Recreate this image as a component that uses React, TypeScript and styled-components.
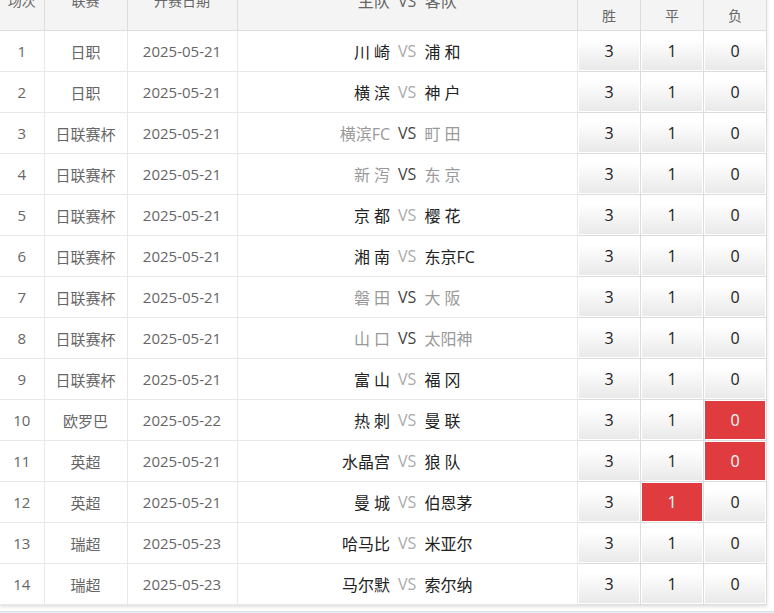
import React from "react";
import styled, { createGlobalStyle } from "styled-components";

const Global = createGlobalStyle`
  html, body { margin: 0; padding: 0; background: #fff; }
  body { font-family: "Open Sans", "Noto Sans CJK SC", sans-serif; overflow: hidden; }
`;

type Match = {
  no: number;
  league: string;
  date: string;
  home: string;
  away: string;
  muted?: boolean;
  w: string;
  d: string;
  l: string;
  hit?: "w" | "d" | "l";
};

const rows: Match[] = [
  { no: 1, league: "日职", date: "2025-05-21", home: "川 崎", away: "浦 和", w: "3", d: "1", l: "0" },
  { no: 2, league: "日职", date: "2025-05-21", home: "横 滨", away: "神 户", w: "3", d: "1", l: "0" },
  { no: 3, league: "日联赛杯", date: "2025-05-21", home: "横滨FC", away: "町 田", muted: true, w: "3", d: "1", l: "0" },
  { no: 4, league: "日联赛杯", date: "2025-05-21", home: "新 泻", away: "东 京", muted: true, w: "3", d: "1", l: "0" },
  { no: 5, league: "日联赛杯", date: "2025-05-21", home: "京 都", away: "樱 花", w: "3", d: "1", l: "0" },
  { no: 6, league: "日联赛杯", date: "2025-05-21", home: "湘 南", away: "东京FC", w: "3", d: "1", l: "0" },
  { no: 7, league: "日联赛杯", date: "2025-05-21", home: "磐 田", away: "大 阪", muted: true, w: "3", d: "1", l: "0" },
  { no: 8, league: "日联赛杯", date: "2025-05-21", home: "山 口", away: "太阳神", muted: true, w: "3", d: "1", l: "0" },
  { no: 9, league: "日联赛杯", date: "2025-05-21", home: "富 山", away: "福 冈", w: "3", d: "1", l: "0" },
  { no: 10, league: "欧罗巴", date: "2025-05-22", home: "热 刺", away: "曼 联", w: "3", d: "1", l: "0", hit: "l" },
  { no: 11, league: "英超", date: "2025-05-21", home: "水晶宫", away: "狼 队", w: "3", d: "1", l: "0", hit: "l" },
  { no: 12, league: "英超", date: "2025-05-21", home: "曼 城", away: "伯恩茅", w: "3", d: "1", l: "0", hit: "d" },
  { no: 13, league: "瑞超", date: "2025-05-23", home: "哈马比", away: "米亚尔", w: "3", d: "1", l: "0" },
  { no: 14, league: "瑞超", date: "2025-05-23", home: "马尔默", away: "索尔纳", w: "3", d: "1", l: "0" },
];

const Viewport = styled.div`
  height: 613px;
  overflow: hidden;
`;

const Panel = styled.div`
  margin-top: -31px;
  width: 767px;
  box-shadow: 0 2px 3px rgba(0, 0, 0, 0.12);
`;

const Table = styled.table`
  width: 767px;
  border-collapse: collapse;
  table-layout: fixed;
  font-size: 15px;
  color: #666;
`;

const Col = styled.col<{ $w?: number }>`
  ${(p) => (p.$w ? `width: ${p.$w}px;` : "")}
`;

const HeadCell = styled.th<{ $big?: boolean }>`
  height: 30px;
  padding: 0;
  background: #f4f4f4;
  border: 1px solid #dcdcdc;
  border-top: none;
  font-weight: normal;
  color: #666;
  font-size: ${(p) => (p.$big ? "16px" : "14px")};
  white-space: pre;
  text-align: center;
  &:first-child { border-left: none; }
`;

const Cell = styled.td<{ $score?: boolean }>`
  padding: ${(p) => (p.$score ? "1px" : "0")};
  text-align: center;
  vertical-align: middle;
  border: 1px solid ${(p) => (p.$score ? "#dcdcdc" : "#e8e8e8")};
  &:first-child { border-left: none; }
`;

const Teams = styled.div`
  display: grid;
  grid-template-columns: 1fr auto 1fr;
  align-items: center;
  column-gap: 8px;
  font-size: 16px;
`;

const Team = styled.span<{ $side: "home" | "away"; $muted?: boolean }>`
  text-align: ${(p) => (p.$side === "home" ? "right" : "left")};
  color: ${(p) => (p.$muted ? "#999" : "#222")};
  white-space: pre;
`;

const Vs = styled.span<{ $muted?: boolean }>`
  color: ${(p) => (p.$muted ? "#444" : "#aaa")};
`;

const Score = styled.div<{ $hit?: boolean }>`
  height: 38px;
  display: flex;
  align-items: center;
  justify-content: center;
  font-size: 16px;
  color: ${(p) => (p.$hit ? "#fff" : "#222")};
  background: ${(p) =>
    p.$hit ? "#e03c40" : "linear-gradient(to bottom, #ffffff 20%, #e9e9e9 100%)"};
`;

const Footer = styled.div`
  margin-top: 6px;
  height: 8px;
  background: #e6eef5;
  border-top: 1px solid #d8e4ee;
`;

export default function App() {
  return (
    <Viewport>
      <Global />
      <Panel>
        <Table>
          <colgroup>
            <Col $w={44} />
            <Col $w={83} />
            <Col $w={110} />
            <Col />
            <Col $w={63} />
            <Col $w={63} />
            <Col $w={63} />
          </colgroup>
          <thead>
            <tr>
              <HeadCell rowSpan={2}>场次</HeadCell>
              <HeadCell rowSpan={2}>联赛</HeadCell>
              <HeadCell rowSpan={2}>开赛日期</HeadCell>
              <HeadCell rowSpan={2} $big>{"主队  VS  客队"}</HeadCell>
              <HeadCell colSpan={3}>欧赔</HeadCell>
            </tr>
            <tr>
              <HeadCell>胜</HeadCell>
              <HeadCell>平</HeadCell>
              <HeadCell>负</HeadCell>
            </tr>
          </thead>
          <tbody>
            {rows.map((r) => (
              <tr key={r.no}>
                <Cell>{r.no}</Cell>
                <Cell>{r.league}</Cell>
                <Cell>{r.date}</Cell>
                <Cell>
                  <Teams>
                    <Team $side="home" $muted={r.muted}>{r.home}</Team>
                    <Vs $muted={r.muted}>VS</Vs>
                    <Team $side="away" $muted={r.muted}>{r.away}</Team>
                  </Teams>
                </Cell>
                <Cell $score><Score $hit={r.hit === "w"}>{r.w}</Score></Cell>
                <Cell $score><Score $hit={r.hit === "d"}>{r.d}</Score></Cell>
                <Cell $score><Score $hit={r.hit === "l"}>{r.l}</Score></Cell>
              </tr>
            ))}
          </tbody>
        </Table>
      </Panel>
      <Footer />
    </Viewport>
  );
}
